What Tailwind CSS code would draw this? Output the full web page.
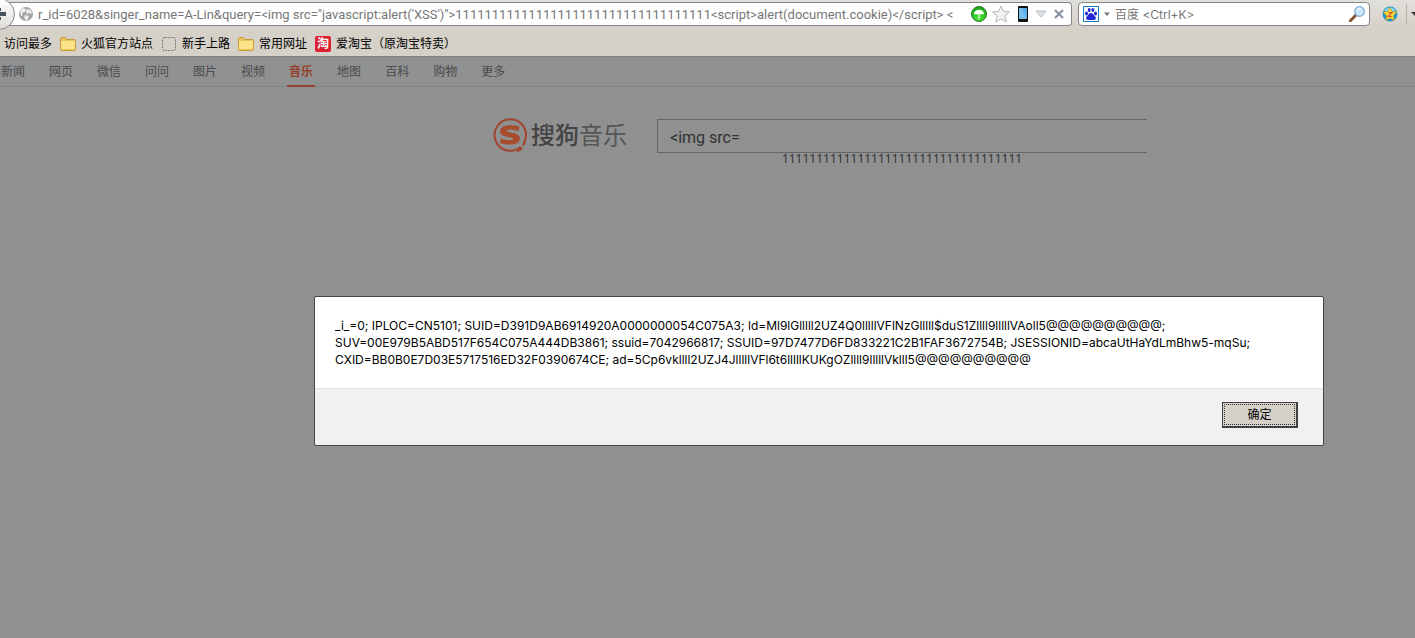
<!DOCTYPE html>
<html lang="zh-CN">
<head>
<meta charset="utf-8">
<title>搜狗音乐</title>
<script src="https://cdn.jsdelivr.net/npm/@tailwindcss/browser@4"></script>
</head>
<body class="flex min-h-screen flex-col overflow-x-hidden bg-[#8f9091] font-['Noto_Sans','Noto_Sans_CJK_SC',sans-serif] text-xs text-black">

<header class="border-b border-[#808080] bg-linear-to-b from-[#e2e0db] via-[#d5d0c8] to-[#d5d0c8]">
  <div class="flex h-7 items-center">
    <button type="button" aria-label="后退" class="relative z-10 -ml-[17px] flex h-8 w-8 shrink-0 items-center rounded-full border border-[#8a8a8a] bg-linear-to-b from-white to-[#dedcd8] pl-4">
      <svg class="h-4 w-3" viewBox="0 0 12 16"><path d="M0 6h6v4H0zM0 2h1v3H0zM0 11h1v3H0z" fill="#46505e"/></svg>
    </button>
    <form class="-ml-4 flex h-6 flex-1 items-center rounded-r-sm border border-l-0 border-[#858585] bg-white pl-[19px] pr-1">
      <svg class="h-4 w-4 shrink-0" viewBox="0 0 16 16"><circle cx="8" cy="8" r="7" fill="#a3a3a3"/><path d="M2 5l3-3 3 1-1 3-3 1 1 2-2 1zM9 3l4 1 1 4-3-1-2 1-1-2zM7 9l4 1-1 3-2 2-2-4z" fill="#ececec"/></svg>
      <label for="url" class="sr-only">地址</label>
      <input id="url" class="ml-1 h-5 min-w-0 flex-1 font-['Roboto',sans-serif] text-[13px] text-[#777] outline-none" value="r_id=6028&amp;singer_name=A-Lin&amp;query=&lt;img src=&quot;javascript:alert('XSS')&quot;&gt;11111111111111111111111111111111111&lt;script&gt;alert(document.cookie)&lt;/script&gt; &lt;">
      <div class="ml-1 flex shrink-0 items-center">
        <button type="button" aria-label="安全"><svg class="h-4 w-4" viewBox="0 0 16 16"><defs><radialGradient id="gr" cx=".5" cy=".8" r=".8"><stop offset="0" stop-color="#4ee83a"/><stop offset="1" stop-color="#13a310"/></radialGradient></defs><circle cx="8" cy="8" r="7.500" fill="url(#gr)" stroke="#28782c"/><path d="M3 8.500a5 4.800 0 0 1 10 0q-1.500-1-3 0-.7-.5-1.400-.5v4q-.2 1.300-1.600 1l.4-1V8Q6.700 8 6 8.500q-1.500-1-3 0z" fill="#fff"/></svg></button>
        <button type="button" aria-label="收藏" class="ml-1"><svg class="h-5 w-5" viewBox="0 0 20 20"><path d="M10 2l2.400 5.500 6 .5-4.600 4 1.500 6L10 14.800 4.700 18l1.500-6-4.600-4 6-.5z" fill="#f3f3f3" stroke="#b5b5b5"/></svg></button>
        <button type="button" aria-label="手机" class="ml-1"><svg class="h-4 w-4" viewBox="0 0 16 16"><rect x="3" width="10" height="16" rx="1" fill="#111"/><path d="M4 2h8v11H4z" fill="#55aeea"/><path d="M4 2h3l5 11H4z" fill="#78bdeb"/></svg></button>
        <button type="button" aria-label="展开" class="ml-0.5"><svg class="h-4 w-4" viewBox="0 0 16 16"><path d="M3 5h10l-5 6z" fill="#dce0e6" stroke="#b6bdc7"/></svg></button>
        <button type="button" aria-label="停止" class="ml-0.5"><svg class="h-4 w-4" viewBox="0 0 16 16"><path d="M4 4l8 8M12 4l-8 8" stroke="#8793a0" stroke-width="2.200"/></svg></button>
      </div>
    </form>
    <form class="ml-1.5 flex h-6 w-[292px] shrink-0 items-center rounded-sm border border-[#858585] bg-white px-1">
      <button type="button" aria-label="搜索引擎" class="flex shrink-0 items-center gap-1">
        <svg class="h-4 w-4" viewBox="0 0 16 16"><path d="M.5.500h15v15H.5z" fill="#fff" stroke="#1477c4"/><g fill="#2424d8"><ellipse cx="3.500" cy="7.500" rx="1.500" ry="2"/><ellipse cx="6.200" cy="4" rx="1.500" ry="2.100"/><ellipse cx="9.900" cy="4" rx="1.500" ry="2.100"/><ellipse cx="12.500" cy="7.500" rx="1.500" ry="2"/><path d="M8 7c2 0 2.500 2 4 3.300s1 3.700-1 3.700H5c-2 0-2.500-2.300-1-3.700S6 7 8 7z"/></g></svg>
        <svg class="h-2 w-2" viewBox="0 0 8 8"><path d="M1 2.500h6L4 6z" fill="#777"/></svg>
      </button>
      <label for="engine" class="sr-only">搜索</label>
      <input id="engine" class="ml-1 h-5 min-w-0 flex-1 font-['Inter','Noto_Sans_CJK_SC',sans-serif] outline-none placeholder:text-[#777]" placeholder="百度 &lt;Ctrl+K&gt;">
      <button type="button" aria-label="搜索"><svg class="h-4 w-4" viewBox="0 0 16 16"><path d="M1 15l6-6" stroke="#875431" stroke-width="3" stroke-linecap="round"/><circle cx="10.500" cy="5.500" r="4.800" fill="#c9e7fb" stroke="#7da9d4" stroke-width="1.300"/><path d="M7.500 5q1-3 4-2.500" stroke="#fff" fill="none"/></svg></button>
    </form>
    <button type="button" aria-label="附加组件" class="ml-3 shrink-0"><svg class="h-4 w-4" viewBox="0 0 16 16"><circle cx="8" cy="8" r="7.500" fill="#2196c9"/><path d="M2 4q6-5 12 0L8 7z" fill="#86daf5"/><path d="M8 1.500l2 4 4.700.6-3.400 3.300.8 4.800L8 12l-4.100 2.200.8-4.800L1.300 6.100 6 5.500z" fill="#ffe04a" stroke="#d59a18" stroke-width=".8"/><path d="M6 6.500h4l-4 4h4" fill="none" stroke="#df571a" stroke-width="1.200"/></svg></button>
    <span class="ml-2 h-5 w-px shrink-0 bg-[#b5b2ac]"></span>
    <button type="button" aria-label="更多工具" class="ml-1 w-1 shrink-0 overflow-hidden"><svg class="h-2 w-1" viewBox="0 0 4 8"><path d="M0 2h8L4 6z" fill="#333"/></svg></button>
  </div>

  <nav aria-label="书签" class="flex h-7 items-center whitespace-nowrap pl-1 pt-1">
    <a href="#">访问最多</a>
    <a href="#" class="ml-2 flex items-center gap-[5px]"><svg class="h-4 w-4" viewBox="0 0 16 16"><path d="M.5 2.500q0-1 1-1h4l1 2h8q1 0 1 1v9q0 1-1 1h-13q-1 0-1-1z" fill="#e8c55c" stroke="#c99b35"/><path d="M1 5h14v8H1z" fill="#fbe48a"/></svg>火狐官方站点</a>
    <a href="#" class="ml-2 flex items-center gap-[5px]"><svg class="h-4 w-4" viewBox="0 0 16 16"><rect x="1.500" y="1.500" width="13" height="13" rx="2" fill="none" stroke="#777" stroke-dasharray="2 1"/></svg>新手上路</a>
    <a href="#" class="ml-2 flex items-center gap-[5px]"><svg class="h-4 w-4" viewBox="0 0 16 16"><path d="M.5 2.500q0-1 1-1h4l1 2h8q1 0 1 1v9q0 1-1 1h-13q-1 0-1-1z" fill="#e8c55c" stroke="#c99b35"/><path d="M1 5h14v8H1z" fill="#fbe48a"/></svg>常用网址</a>
    <a href="#" class="ml-2 flex items-center gap-[5px]"><span class="flex h-4 w-4 items-center justify-center rounded-xs bg-[#dc2030] font-bold leading-4 text-white">淘</span>爱淘宝（原淘宝特卖）</a>
  </nav>
</header>

<main class="relative flex-1 bg-[#8e9092] bg-[conic-gradient(#929290_25%,#8d8f92_0_50%,#929290_0_75%,#8d8f92_0)] bg-size-[4px_4px]">
  <nav aria-label="频道" class="flex h-[30px] gap-5 border-b border-[#858688] whitespace-nowrap text-[#4b4b4b]">
    <a href="#" class="-ml-px px-0.5 leading-[30px]">新闻</a>
    <a href="#" class="px-0.5 leading-[30px]">网页</a>
    <a href="#" class="px-0.5 leading-[30px]">微信</a>
    <a href="#" class="px-0.5 leading-[30px]">问问</a>
    <a href="#" class="px-0.5 leading-[30px]">图片</a>
    <a href="#" class="px-0.5 leading-[30px]">视频</a>
    <a href="#" aria-current="page" class="h-[30px] border-b-2 border-[#96412d] px-0.5 font-bold leading-[30px] text-[#96412d]">音乐</a>
    <a href="#" class="px-0.5 leading-[30px]">地图</a>
    <a href="#" class="px-0.5 leading-[30px]">百科</a>
    <a href="#" class="px-0.5 leading-[30px]">购物</a>
    <a href="#" class="px-0.5 leading-[30px]">更多</a>
  </nav>

  <div class="flex pl-[493px] pt-8">
    <a href="#" aria-label="搜狗音乐" class="flex h-8 shrink-0 items-center gap-1 text-2xl leading-8 text-[#444]">
      <svg class="h-9 w-[34px] shrink-0" viewBox="0 0 34 36"><path d="M27 30.300A15.700 15.700 0 1 1 31.300 25" fill="none" stroke="#a3452f" stroke-width="2" transform="rotate(-3 17 18)"/><path d="M24 34.500q3-1 5-4M31.800 24q-.4 2.500-2 4.200" fill="none" stroke="#a3452f" stroke-width="2.200"/><path d="M26.500 9.500l-.8 4.500q-5-1.600-9-1.500-3 .1-3 1.400 0 1 3.500 1.500 9.800 1.300 9.800 5.800 0 6.300-10.500 6.300-5.500 0-9.500-1.500l.8-4.600q5 2 9.500 1.900 2.800-.1 2.800-1.400 0-1.200-3.800-1.700-9.300-1.200-9.300-5.800 0-6.200 10-6.200 5.300 0 9.500 1.300z" fill="#a84c2e"/></svg>
      <span class="font-medium">搜狗<span class="font-normal text-[#555]">音乐</span></span>
    </a>
    <div class="ml-[30px] w-[490px]">
      <label for="q" class="sr-only">搜索音乐</label>
      <input id="q" class="block h-[34px] w-full border border-r-0 border-[#65666a] bg-transparent px-3 pt-0.5 font-['Roboto',sans-serif] text-base text-[#333] outline-none" value="&lt;img src=">
      <p class="text-center leading-3 text-[#333]">11111111111111111111111111111111111</p>
    </div>
  </div>
</main>

<div role="alertdialog" aria-modal="true" aria-describedby="msg" class="absolute left-[314px] right-[91px] top-[296px] rounded-xs border border-[#454545] bg-[#f1f1f1]">
  <p id="msg" class="h-[92px] whitespace-nowrap rounded-t-xs border-b border-[#e2e2e2] bg-white px-5 pt-5 font-['Inter',sans-serif] leading-[17px]">_i_=0; IPLOC=CN5101; SUID=D391D9AB6914920A0000000054C075A3; ld=Ml9lGlllll2UZ4Q0lllllVFlNzGlllll$duS1Zllll9lllllVAoll5@@@@@@@@@@;<br>SUV=00E979B5ABD517F654C075A444DB3861; ssuid=7042966817; SSUID=97D7477D6FD833221C2B1FAF3672754B; JSESSIONID=abcaUtHaYdLmBhw5-mqSu;<br>CXID=BB0B0E7D03E5717516ED32F0390674CE; ad=5Cp6vkllll2UZJ4JlllllVFl6t6lllllKUKgOZllll9lllllVklll5@@@@@@@@@@</p>
  <div class="flex justify-end pb-[17px] pr-[25px] pt-[13px]">
    <button type="button" class="h-[26px] w-[76px] border border-b-2 border-r-2 border-[#404040] bg-[#d5d0c8] p-px"><span class="flex h-full items-center justify-center border border-dotted border-[#333]">确定</span></button>
  </div>
</div>
</body>
</html>
